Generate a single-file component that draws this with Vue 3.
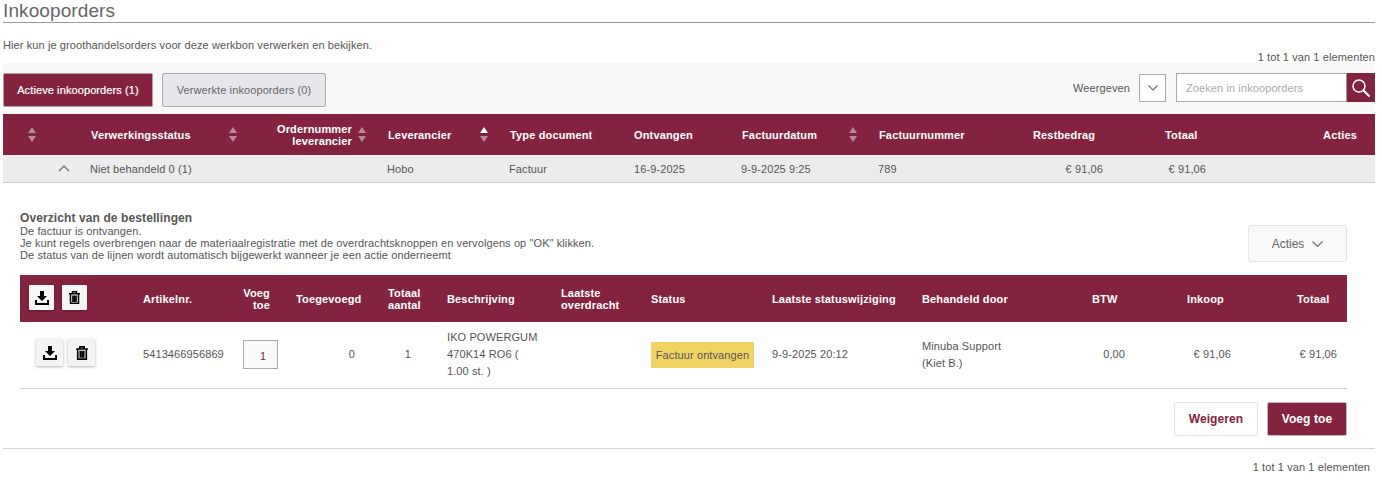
<script setup>
const topColumns = [
  { key: 'sort0', label: '', sort: 'idle', cls: 'c-first' },
  { key: 'status', label: 'Verwerkingsstatus', sort: 'idle', cls: 'c-status' },
  { key: 'order', label: 'Ordernummer leverancier', sort: 'idle', cls: 'c-order' },
  { key: 'supplier', label: 'Leverancier', sort: 'up', cls: 'c-supplier' },
  { key: 'type', label: 'Type document', cls: 'c-plain' },
  { key: 'received', label: 'Ontvangen', cls: 'c-plain' },
  { key: 'date', label: 'Factuurdatum', sort: 'idle', cls: 'c-date' },
  { key: 'number', label: 'Factuurnummer', cls: 'c-plain' },
  { key: 'rest', label: 'Restbedrag', cls: 'c-plain' },
  { key: 'total', label: 'Totaal', cls: 'c-plain' },
  { key: 'actions', label: 'Acties', cls: 'c-actions' }
]

const lineHeaders = [
  { label: 'Artikelnr.', cls: '' },
  { label: 'Voeg toe', cls: 'h-add' },
  { label: 'Toegevoegd', cls: '' },
  { label: 'Totaal aantal', cls: 'h-narrow' },
  { label: 'Beschrijving', cls: '' },
  { label: 'Laatste overdracht', cls: 'h-narrow' },
  { label: 'Status', cls: '' },
  { label: 'Laatste statuswijziging', cls: '' },
  { label: 'Behandeld door', cls: '' },
  { label: 'BTW', cls: '' },
  { label: 'Inkoop', cls: '' },
  { label: 'Totaal', cls: '' }
]
</script>

<template>
  <div class="page">
    <h1 class="title">Inkooporders</h1>
    <p class="intro">Hier kun je groothandelsorders voor deze werkbon verwerken en bekijken.</p>
    <div class="count">1 tot 1 van 1 elementen</div>

    <div class="toolbar">
      <div class="tabs">
        <button class="tab active">Actieve inkooporders (1)</button>
        <button class="tab">Verwerkte inkooporders (0)</button>
      </div>
      <div class="tools">
        <span class="show-label">Weergeven</span>
        <div class="select">
          <svg width="10" height="6" viewBox="0 0 10 6"><path d="M.5.5L5 5 9.500.5" fill="none" stroke="#666" stroke-width="1.1" /></svg>
        </div>
        <div class="search">
          <input class="search-input" placeholder="Zoeken in inkooporders">
          <button class="search-btn">
            <svg width="18" height="18" viewBox="0 0 18 18"><circle cx="7" cy="7" r="6" fill="none" stroke="#fff" stroke-width="1.500" /><path d="M11.500 11.500l6 6" stroke="#fff" stroke-width="2" /></svg>
          </button>
        </div>
      </div>
    </div>

    <div class="top-head top-grid">
      <div v-for="col in topColumns" :key="col.key" class="top-th" :class="col.cls">
        <span v-if="col.label">{{ col.label }}</span>
        <svg v-if="col.sort" class="sort" width="8" height="15" viewBox="0 0 8 15">
          <path d="M4 0l4 6H0z" :fill="col.sort === 'up' ? '#fff' : '#b78a98'" />
          <path d="M4 15L0 9h8z" fill="#b78a98" />
        </svg>
      </div>
    </div>
    <div class="top-row top-grid">
      <div class="toggle">
        <svg width="12" height="7" viewBox="0 0 12 7"><path d="M1 6l5-5 5 5" fill="none" stroke="#666" stroke-width="1.1" /></svg>
      </div>
      <div>Niet behandeld 0 (1)</div>
      <div></div>
      <div>Hobo</div>
      <div>Factuur</div>
      <div class="received">16-9-2025</div>
      <div>9-9-2025 9:25</div>
      <div>789</div>
      <div class="amount-rest">€ 91,06</div>
      <div class="amount-total">€ 91,06</div>
      <div></div>
    </div>

    <section class="details">
      <div class="details-top">
        <div class="details-text">
          <h2>Overzicht van de bestellingen</h2>
          <p>De factuur is ontvangen.</p>
          <p>Je kunt regels overbrengen naar de materiaalregistratie met de overdrachtsknoppen en vervolgens op "OK" klikken.</p>
          <p>De status van de lijnen wordt automatisch bijgewerkt wanneer je een actie onderneemt</p>
        </div>
        <button class="actions-btn">
          Acties
          <svg width="11" height="6" viewBox="0 0 11 6"><path d="M.5.5l5 5 5-5" fill="none" stroke="#666" stroke-width="1.1" /></svg>
        </button>
      </div>

      <div class="line-head line-grid">
        <div class="head-icons">
          <button class="icon-btn small">
            <svg width="14" height="14" viewBox="0 0 14 14"><path d="M5 0h4v5h3L7 10 2 5h3z" fill="#000" /><path d="M1 9v4h12V9" fill="none" stroke="#000" stroke-width="2" /></svg>
          </button>
          <button class="icon-btn small">
            <svg width="11" height="13" viewBox="0 0 11 13"><path d="M3.500 2.500V.8h4v1.700M0 2.800h11M1.500 3v9.200h8V3M3.900 4.500v6.500M5.500 4.500v6.500M7.100 4.500v6.500" fill="none" stroke="#000" stroke-width="1.500" /></svg>
          </button>
        </div>
        <div v-for="h in lineHeaders" :key="h.label" class="line-th" :class="h.cls">{{ h.label }}</div>
      </div>

      <div class="line-row line-grid">
        <div class="row-icons">
          <button class="icon-btn">
            <svg width="14" height="14" viewBox="0 0 14 14"><path d="M5 0h4v5h3L7 10 2 5h3z" fill="#000" /><path d="M1 9v4h12V9" fill="none" stroke="#000" stroke-width="2" /></svg>
          </button>
          <button class="icon-btn">
            <svg width="12" height="14" viewBox="0 0 11 13"><path d="M3.500 2.500V.8h4v1.700M0 2.800h11M1.500 3v9.200h8V3M3.900 4.500v6.500M5.500 4.500v6.500M7.100 4.500v6.500" fill="none" stroke="#000" stroke-width="1.500" /></svg>
          </button>
        </div>
        <div>5413466956869</div>
        <div class="qty-cell"><div class="qty">1</div></div>
        <div class="num-added">0</div>
        <div class="num-amount">1</div>
        <div class="desc">IKO POWERGUM 470K14 RO6 ( 1.00 st. )</div>
        <div></div>
        <div class="badge-cell"><span class="badge">Factuur ontvangen</span></div>
        <div>9-9-2025 20:12</div>
        <div class="handled">Minuba Support<br>(Kiet B.)</div>
        <div class="num-vat">0,00</div>
        <div class="num-buy">€ 91,06</div>
        <div class="num-total">€ 91,06</div>
      </div>

      <div class="footer-btns">
        <button class="btn-reject">Weigeren</button>
        <button class="btn-add">Voeg toe</button>
      </div>
    </section>

    <div class="bottom">1 tot 1 van 1 elementen</div>
  </div>
</template>

<style>
body {
  overflow: hidden;
}
</style>

<style scoped>
.page {
  width: 1372px;
  margin-left: 3px;
  font-family: "Liberation Sans", Arial, sans-serif;
  font-size: 11px;
  color: #555;
  letter-spacing: 0.1px;
}

.title {
  margin: 0;
  height: 22px;
  line-height: 21px;
  font-size: 19px;
  font-weight: 400;
  color: #666;
  letter-spacing: 0.1px;
  border-bottom: 1px solid #999;
  box-sizing: content-box;
}

.intro {
  margin: 16px 0 0;
  line-height: 13px;
}

.count {
  margin-top: -1px;
  height: 12px;
  line-height: 12px;
  text-align: right;
}

.toolbar {
  height: 51px;
  background: #f8f8f8;
  display: flex;
  justify-content: space-between;
  padding-top: 10px;
  box-sizing: border-box;
}

.tabs {
  display: flex;
  gap: 9px;
}

.tab {
  width: 164px;
  height: 34px;
  border: 1px solid #a9a9b0;
  border-radius: 2px;
  background: #e7e7eb;
  color: #666;
  font: inherit;
  letter-spacing: 0.1px;
  padding: 0;
}

.tab.active {
  width: 150px;
  background: #842340;
  border-color: #a8a0a4;
  color: #fff;
  -webkit-text-stroke: 0.2px #fff;
}

.tools {
  display: flex;
  align-items: flex-start;
}

.show-label {
  margin-top: 9px;
  margin-right: 9px;
}

.select {
  width: 27px;
  height: 28px;
  margin-top: 1px;
  margin-right: 10px;
  box-sizing: border-box;
  border: 1px solid #aaa;
  background: #fff;
  display: flex;
  align-items: center;
  justify-content: center;
}

.search {
  display: flex;
  height: 29px;
}

.search-input {
  width: 171px;
  box-sizing: border-box;
  border: 1px solid #aaa;
  border-right-color: #999;
  padding: 0 9px;
  font: inherit;
  letter-spacing: 0.1px;
  outline: none;
  background: #fff;
}

.search-input::placeholder {
  color: #aaa;
  opacity: 1;
}

.search-btn {
  width: 28px;
  border: 0;
  padding: 0;
  background: #842340;
  display: flex;
  align-items: center;
  justify-content: center;
}

.top-grid {
  display: grid;
  grid-template-columns: 87px 180px 117px 122px 124px 108px 137px 154px 132px 96px 115px;
  align-items: center;
}

.top-head {
  height: 41px;
  background: #842340;
  color: #fff;
  font-weight: 700;
  letter-spacing: 0.15px;
}

.top-th {
  display: flex;
  align-items: center;
  justify-content: space-between;
  line-height: 12px;
}

.c-first {
  justify-content: flex-start;
  padding-left: 25px;
}

.c-status {
  padding-left: 1px;
  padding-right: 33px;
}

.c-order {
  justify-content: flex-end;
  text-align: right;
  gap: 6px;
  padding-right: 21px;
}

.c-order span {
  width: 76px;
}

.c-supplier,
.c-date {
  padding-left: 1px;
  padding-right: 21px;
}

.c-plain {
  padding-left: 1px;
}

.c-actions {
  justify-content: flex-end;
  padding-right: 18px;
}

.top-row {
  height: 28px;
  box-sizing: border-box;
  background: #ececec;
  border-bottom: 1px solid #ccc;
}

.toggle {
  padding-left: 55px;
  display: flex;
  align-items: center;
}

.received {
  padding-left: 1px;
}

.amount-rest {
  text-align: right;
  padding-right: 61px;
}

.amount-total {
  text-align: right;
  padding-right: 54px;
}

.details {
  padding: 28px 0 0 17px;
  margin-right: 28px;
}

.details-top {
  display: flex;
  justify-content: space-between;
  align-items: flex-start;
  height: 64px;
}

.details-text h2 {
  margin: 0;
  font-size: 12px;
  line-height: 14px;
  font-weight: 700;
}

.details-text p {
  margin: 0;
  line-height: 12px;
}

.actions-btn {
  width: 99px;
  height: 37px;
  margin-top: 14px;
  border: 1px solid #e5e5e5;
  border-radius: 3px;
  background: #f9f9f9;
  color: #666;
  font: inherit;
  font-size: 12px;
  display: flex;
  align-items: center;
  justify-content: center;
  gap: 8px;
  padding: 0;
}

.line-grid {
  display: grid;
  grid-template-columns: 123px 100px 53px 92px 59px 114px 90px 121px 150px 170px 95px 110px 50px;
  align-items: center;
}

.line-head {
  height: 47px;
  background: #842340;
  color: #fff;
  font-weight: 700;
  line-height: 12px;
  letter-spacing: 0.15px;
}

.head-icons {
  display: flex;
  gap: 8px;
  padding-left: 9px;
  padding-bottom: 2px;
}

.h-add {
  width: 27px;
  text-align: right;
}

.h-narrow {
  width: 60px;
}

.icon-btn {
  width: 27px;
  height: 27px;
  border: 0;
  padding: 0;
  background: #f4f4f4;
  border-radius: 1px;
  box-shadow: 0 1px 3px rgba(0, 0, 0, 0.3);
  display: flex;
  align-items: center;
  justify-content: center;
}

.icon-btn.small {
  width: 25px;
  height: 25px;
  background: #f6f6f6;
}

.line-row {
  height: 67px;
  box-sizing: border-box;
  padding-bottom: 2px;
  border-bottom: 1px solid #d5d5d5;
}

.row-icons {
  display: flex;
  gap: 5px;
  padding-left: 16px;
  padding-bottom: 3px;
}

.qty {
  width: 35px;
  height: 29px;
  box-sizing: border-box;
  border: 1px solid #aaa;
  background: #fafafa;
  color: #842340;
  text-align: center;
  line-height: 30px;
  padding-left: 5px;
}

.num-added {
  text-align: right;
  padding-right: 33px;
}

.num-amount {
  text-align: right;
  padding-right: 36px;
}

.desc {
  width: 92px;
  line-height: 17px;
}

.badge-cell {
  padding-top: 2px;
}

.badge {
  display: block;
  width: 103px;
  height: 26px;
  line-height: 26px;
  text-align: center;
  background: #f0d463;
  white-space: nowrap;
}

.handled {
  line-height: 17px;
  padding-top: 2px;
}

.num-vat {
  text-align: right;
  padding-right: 62px;
}

.num-buy {
  text-align: right;
  padding-right: 66px;
}

.num-total {
  text-align: right;
  padding-right: 10px;
  white-space: nowrap;
}

.footer-btns {
  display: flex;
  justify-content: flex-end;
  align-items: center;
  gap: 9px;
  padding: 13px 0 12px;
}

.btn-reject,
.btn-add {
  height: 34px;
  font: inherit;
  font-size: 12px;
  font-weight: 700;
  letter-spacing: 0.1px;
  border-radius: 2px;
  padding: 0;
}

.btn-reject {
  width: 84px;
  background: #fff;
  color: #842340;
  border: 1px solid #e2e2e2;
}

.btn-add {
  width: 80px;
  background: #842340;
  color: #fff;
  border: 1px solid #bbb;
}

.bottom {
  border-top: 1px solid #d5d5d5;
  padding: 12px 5px 0 0;
  text-align: right;
  line-height: 13px;
}
</style>
